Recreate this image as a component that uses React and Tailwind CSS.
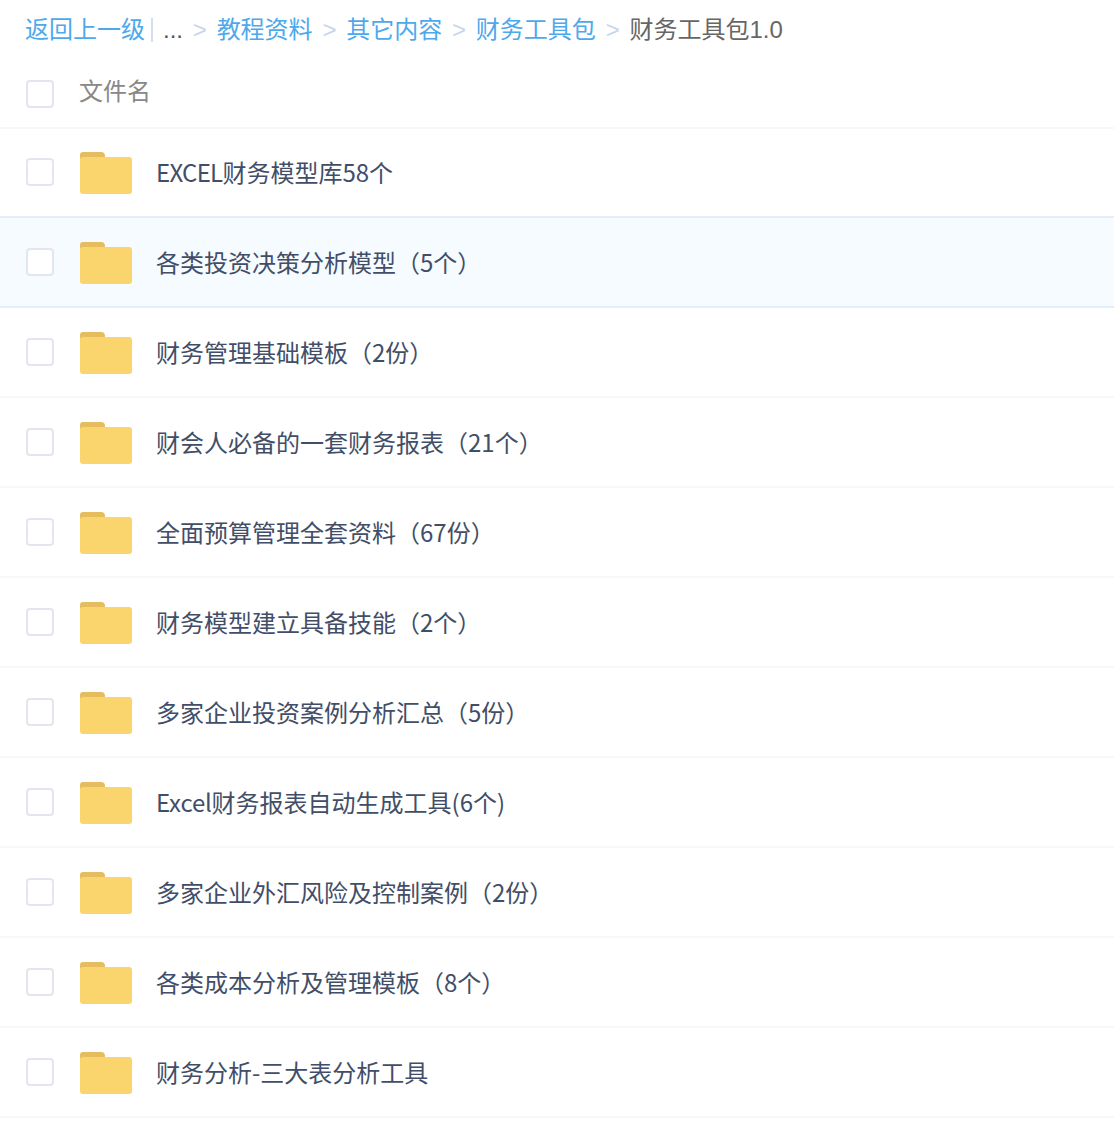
const rows = [
  ["EXCEL", "财务模型库58个", "tracking-[-0.7px]"],
  ["", "各类投资决策分析模型（5个）", ""],
  ["", "财务管理基础模板（2份）", ""],
  ["", "财会人必备的一套财务报表（21个）", ""],
  ["", "全面预算管理全套资料（67份）", ""],
  ["", "财务模型建立具备技能（2个）", ""],
  ["", "多家企业投资案例分析汇总（5份）", ""],
  ["Excel", "财务报表自动生成工具(6个)", "tracking-[-0.2px]"],
  ["", "多家企业外汇风险及控制案例（2份）", ""],
  ["", "各类成本分析及管理模板（8个）", ""],
  ["", "财务分析-三大表分析工具", ""],
];

function Folder() {
  return (
    <svg width="52" height="43" viewBox="0 0 52 43" className="shrink-0 block">
      <path d="M0 4a3 3 0 0 1 3-3h18a4 4 0 0 1 4 4v3H0z" fill="#E5BC5E" />
      <path d="M0 9a3 3 0 0 1 3-3h46a3 3 0 0 1 3 3v31a3 3 0 0 1-3 3H3a3 3 0 0 1-3-3z" fill="#FAD56E" />
    </svg>
  );
}

function Check() {
  return <span className="block w-7 h-7 shrink-0 rounded-[4px] border-2 border-[#e3e6ee] bg-white" />;
}

function Sep() {
  return <span className="text-[#c8d5ea] mx-[9.8px]">&gt;</span>;
}

export default function App() {
  return (
    <div className="w-[1114px] h-[1126px] bg-white overflow-hidden font-['Liberation_Sans','Noto_Sans_CJK_SC',sans-serif] text-[24px]">
      <div className="h-[60px] pl-[25px] flex items-center whitespace-nowrap">
        <span className="text-[#4ea8ec]">返回上一级</span>
        <span className="w-[2px] h-[24px] bg-[#d3deee] ml-[6px] mr-[10px]" />
        <span className="text-[#555]">...</span>
        <Sep />
        <span className="text-[#4ea8ec]">教程资料</span>
        <Sep />
        <span className="text-[#4ea8ec]">其它内容</span>
        <Sep />
        <span className="text-[#4ea8ec]">财务工具包</span>
        <Sep />
        <span className="text-[#666]">财务工具包1.0</span>
      </div>
      <div className="h-[69px] pl-[26px] flex items-start pt-[20px] border-b-2 border-[#f5f7fb]">
        <Check />
        <span className="ml-[25px] text-[#888] leading-[24px]">文件名</span>
      </div>
      {rows.map(([latin, t, tracking], i) => (
        <div
          key={t}
          className={
            i === 0
              ? "h-[89px] pb-[1px] pl-[26px] flex items-center border-b-2 border-[#f5f7fb]"
              : i === 1
              ? "h-[92px] -mt-[2px] pl-[26px] flex items-center bg-[#f6fbff] border-y-2 border-[#e3eefa]"
              : "h-[90px] pl-[26px] flex items-center border-b-2 border-[#f5f7fb]"
          }
        >
          <Check />
          <span className="ml-[26px]"><Folder /></span>
          <span className="ml-[24px] text-[#424e67] whitespace-nowrap font-['Noto_Sans_CJK_SC',sans-serif] leading-[36px]">
            {latin && <span className={tracking}>{latin}</span>}
            {t}
          </span>
        </div>
      ))}
    </div>
  );
}
